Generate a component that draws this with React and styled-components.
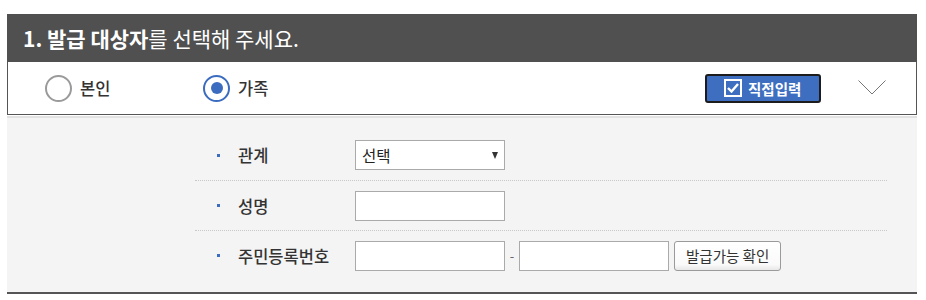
import React from 'react';
import styled, { createGlobalStyle } from 'styled-components';

const GlobalStyle = createGlobalStyle`
  body {
    margin: 0;
    background: #fff;
    font-family: "Noto Sans CJK KR", "Noto Sans", sans-serif;
    color: #222;
  }
`;

const Page = styled.div`
  padding: 14px 9px 0 7px;
`;

const Header = styled.div`
  height: 48px;
  background: #505050;
  color: #fff;
  display: flex;
  align-items: center;
  padding-left: 16px;
  font-size: 21px;

  b {
    font-weight: 700;
  }
`;

const OptionRow = styled.div`
  height: 52px;
  border: 1px solid #555;
  border-top: none;
  background: #fff;
  display: flex;
  align-items: center;
  padding-left: 37px;
  padding-right: 30px;
`;

const Radio = styled.label`
  display: flex;
  align-items: center;
  gap: 8px;
  width: 158px;
  font-size: 16.5px;
  font-weight: 500;
  color: #333;
`;

const Circle = styled.span`
  box-sizing: border-box;
  width: 27px;
  height: 27px;
  border-radius: 50%;
  border: 2px solid ${(p) => (p.$on ? '#3b6cbf' : '#9a9a9a')};
  display: flex;
  align-items: center;
  justify-content: center;

  &::after {
    content: '';
    display: ${(p) => (p.$on ? 'block' : 'none')};
    width: 12px;
    height: 12px;
    border-radius: 50%;
    background: #3b6cbf;
  }
`;

const Spacer = styled.div`
  flex: 1;
`;

const DirectButton = styled.button`
  box-sizing: border-box;
  width: 116px;
  height: 29px;
  background: #3d6ebf;
  border: 2px solid #1c1c1c;
  border-radius: 3px;
  color: #fff;
  font-family: inherit;
  font-size: 14.5px;
  font-weight: 700;
  display: flex;
  align-items: center;
  padding: 0 0 0 17px;
  gap: 6px;
`;

const Check = styled.span`
  box-sizing: border-box;
  width: 18px;
  height: 18px;
  border: 2px solid #fff;
  display: flex;
  align-items: center;
  justify-content: center;
`;

const Chevron = styled.svg`
  margin-left: 37px;
  margin-bottom: 2px;
`;

const FormArea = styled.div`
  margin-top: 1px;
  border-top: 2px solid #e2e2e2;
  background: #f4f4f4;
  border-bottom: 2px solid #555;
  padding: 12px 30px 12px 188px;
`;

const Row = styled.div`
  height: 50px;
  display: flex;
  align-items: center;
  padding-left: 22px;
  border-top: ${(p) => (p.$first ? 'none' : '1px dotted #c8c8c8')};
  box-sizing: border-box;
`;

const Bullet = styled.span`
  width: 3px;
  height: 3px;
  background: #3b6cbf;
  margin-right: 18px;
`;

const Label = styled.span`
  width: 117px;
  font-size: 16.5px;
  font-weight: 500;
  color: #333;
`;

const Input = styled.div`
  box-sizing: border-box;
  width: 150px;
  height: 30px;
  border: 1px solid #aaa;
  background: #fff;
`;

const Select = styled(Input)`
  display: flex;
  align-items: center;
  justify-content: space-between;
  padding: 0 6px 0 6px;
  font-size: 15.5px;
  color: #222;

  &::after {
    content: '';
    border-left: 3.5px solid transparent;
    border-right: 3.5px solid transparent;
    border-top: 7px solid #333;
  }
`;

const Dash = styled.span`
  width: 14px;
  text-align: center;
  font-size: 13px;
  color: #666;
`;

const CheckButton = styled.button`
  box-sizing: border-box;
  height: 30px;
  margin-left: 5px;
  padding: 0 11px;
  border: 1px solid #9a9a9a;
  border-radius: 3px;
  background: linear-gradient(#fff, #fafafa 80%, #e8e8e8);
  font-family: inherit;
  font-size: 14.5px;
  color: #333;
`;

export default function App() {
  return (
    <>
      <GlobalStyle />
      <Page>
        <Header>
          <b>1. 발급 대상자</b>를 선택해 주세요.
        </Header>
        <OptionRow>
          <Radio>
            <Circle />
            본인
          </Radio>
          <Radio>
            <Circle $on />
            가족
          </Radio>
          <Spacer />
          <DirectButton>
            <Check>
              <svg width="12" height="10" viewBox="0 0 12 10">
                <path d="M1 5 L4.5 8.5 L11 1" fill="none" stroke="#fff" strokeWidth="2.4" />
              </svg>
            </Check>
            직접입력
          </DirectButton>
          <Chevron width="28" height="15" viewBox="0 0 28 15">
            <path d="M0.5 0.5 L14 14 L27.5 0.5" fill="none" stroke="#777" strokeWidth="1" />
          </Chevron>
        </OptionRow>
        <FormArea>
          <Row $first>
            <Bullet />
            <Label>관계</Label>
            <Select>선택</Select>
          </Row>
          <Row>
            <Bullet />
            <Label>성명</Label>
            <Input />
          </Row>
          <Row>
            <Bullet />
            <Label>주민등록번호</Label>
            <Input />
            <Dash>-</Dash>
            <Input />
            <CheckButton>발급가능 확인</CheckButton>
          </Row>
        </FormArea>
      </Page>
    </>
  );
}
